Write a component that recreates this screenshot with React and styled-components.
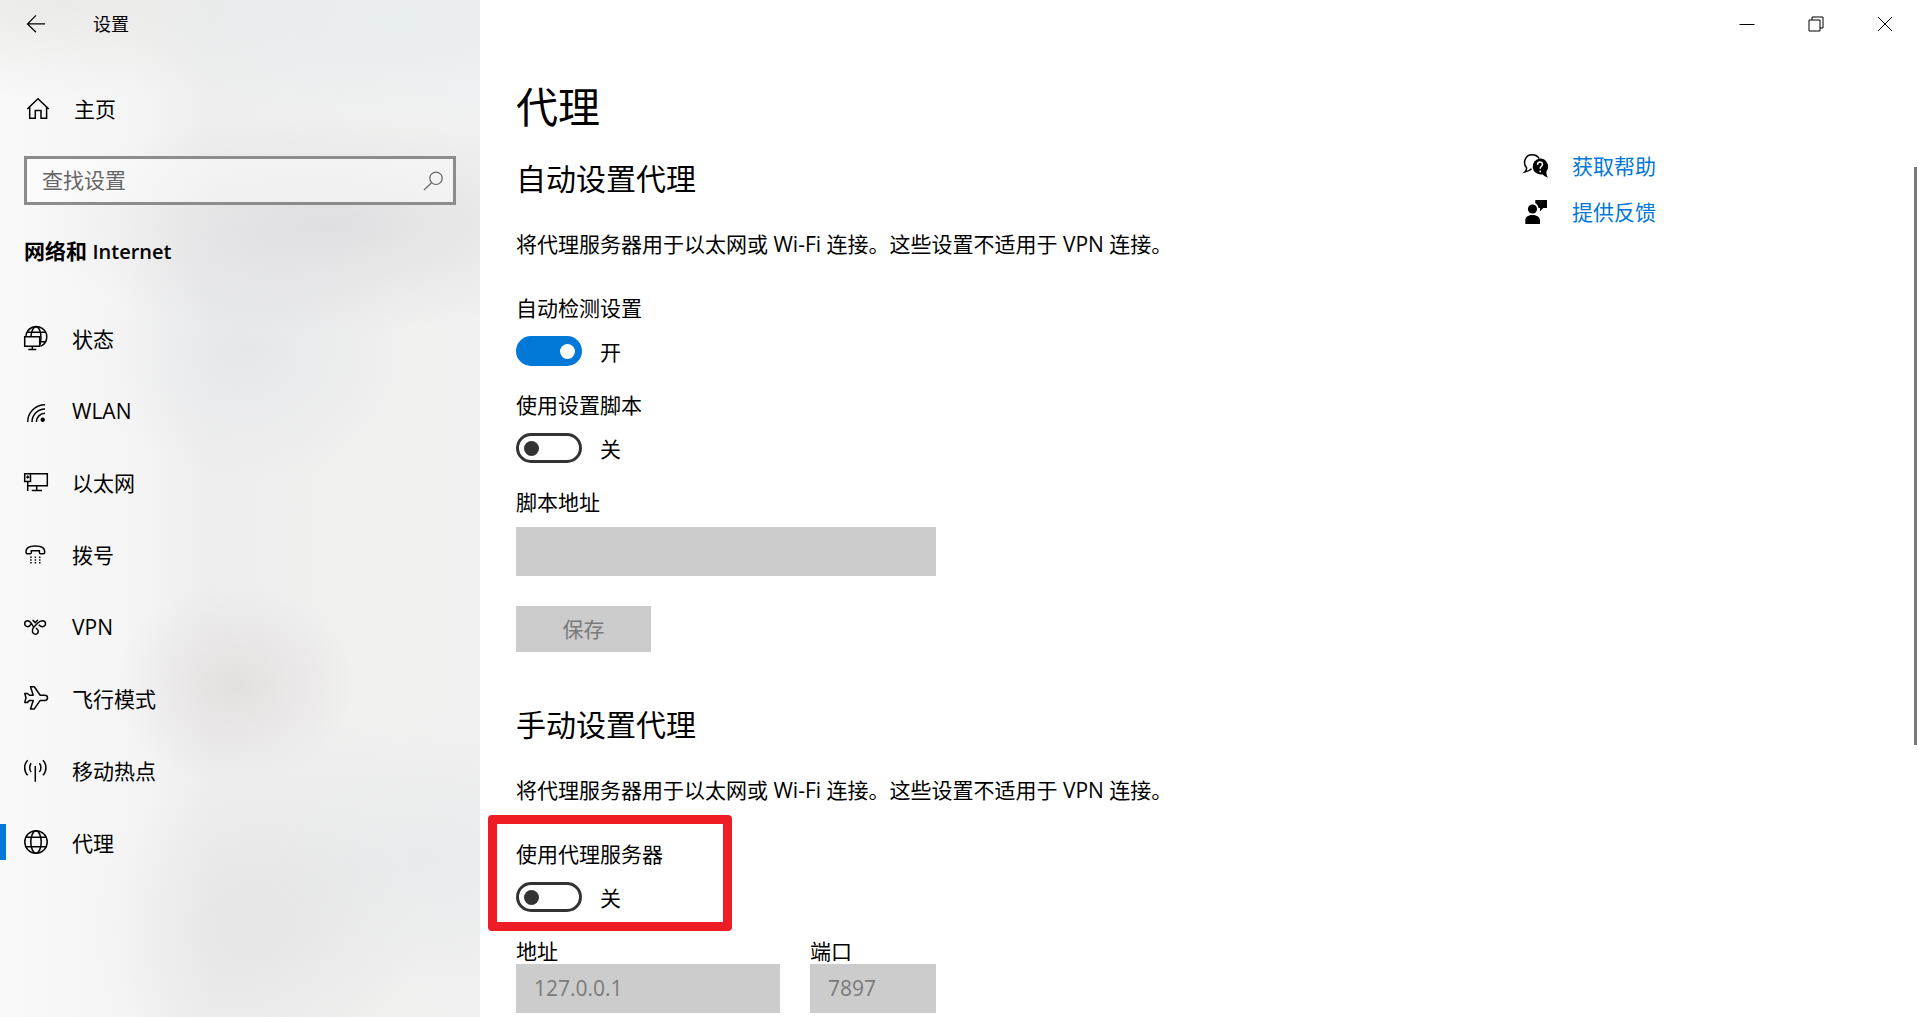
import React, { useState } from "react";
import styled, { createGlobalStyle } from "styled-components";

const accent = "#0078d7";

const GlobalStyle = createGlobalStyle`
  * { box-sizing: border-box; }
  body {
    margin: 0;
    background: #fff;
    color: #000;
    font-family: "Open Sans", "Noto Sans CJK SC", sans-serif;
    font-size: 21px;
    font-weight: 400;
    line-height: 28px;
  }
  input, button { font: inherit; color: inherit; border-radius: 0; }
`;

const Window = styled.div`
  display: flex;
  height: 100vh;
  overflow: hidden;
`;

const Sidebar = styled.aside`
  flex: 0 0 480px;
  display: flex;
  flex-direction: column;
  background:
    radial-gradient(ellipse 120px 100px at 235px 685px, rgba(214, 206, 206, 0.45), rgba(214, 206, 206, 0) 100%),
    radial-gradient(ellipse 300px 110px at 330px 225px, rgba(212, 212, 216, 0.6), rgba(212, 212, 216, 0) 100%),
    radial-gradient(ellipse 170px 130px at 250px 350px, rgba(218, 221, 227, 0.4), rgba(218, 221, 227, 0) 100%),
    radial-gradient(ellipse 170px 160px at 250px 930px, rgba(220, 220, 221, 0.45), rgba(220, 220, 221, 0) 100%),
    radial-gradient(ellipse 240px 150px at 420px 860px, rgba(226, 228, 231, 0.55), rgba(226, 228, 231, 0) 100%),
    radial-gradient(ellipse 260px 110px at 400px 20px, rgba(229, 236, 240, 0.7), rgba(229, 236, 240, 0) 100%),
    radial-gradient(ellipse 360px 100px at 60px 0px, rgba(228, 228, 226, 0.7), rgba(228, 228, 226, 0) 100%),
    linear-gradient(90deg, #f9f9f9 0px, #f5f5f5 130px, #eeeeee 210px, #f1f1f0 400px, #f1f1f1 480px);
`;

const TitleBar = styled.header`
  display: flex;
  align-items: center;
  height: 48px;
  padding-left: 24px;
  gap: 45px;
  font-size: 18px;
  line-height: 24px;
`;

const BackButton = styled.button`
  display: flex;
  padding: 0;
  border: 0;
  background: none;
`;

const HomeLink = styled.a`
  display: flex;
  align-items: center;
  gap: 24px;
  height: 48px;
  margin-top: 37px;
  padding-left: 26px;
  color: inherit;
  text-decoration: none;
`;

const SearchBox = styled.label`
  display: flex;
  align-items: center;
  height: 49px;
  margin: 23px 24px 0;
  padding: 0 8px 0 15px;
  border: 3px solid #8c8c8c;
  background: rgba(255, 255, 255, 0.45);
  color: #666;
`;

const SearchInput = styled.input.attrs({ type: "search" })`
  flex: 1;
  min-width: 0;
  padding: 0 0 2px;
  border: 0;
  outline: 0;
  background: none;
  &::placeholder { color: #666; opacity: 1; }
`;

const Category = styled.h2`
  margin: 32px 24px 0;
  font-size: 21px;
  line-height: 28px;
  font-weight: 700;
`;

const Latin = styled.span`
  font-size: 20px;
  font-weight: 600;
`;

const Nav = styled.nav`
  display: flex;
  flex-direction: column;
  margin-top: 36px;
`;

const NavItem = styled.a`
  display: flex;
  align-items: center;
  gap: 24px;
  height: 72px;
  color: inherit;
  text-decoration: none;
  &::before {
    content: "";
    width: 6px;
    height: 36px;
    margin-right: -6px;
    background: ${(p) => (p.$active ? accent : "transparent")};
  }
`;

const NavLabel = styled.span`
  padding-top: 2px;
`;

const Icon = styled.svg`
  flex: none;
  width: 24px;
  height: 24px;
  overflow: visible;
  fill: none;
  stroke: currentColor;
  stroke-width: ${(p) => p.$stroke || 1.5};
`;

const Main = styled.main`
  position: relative;
  flex: 1;
  min-width: 0;
`;

const CaptionBar = styled.div`
  display: flex;
  justify-content: flex-end;
  height: 48px;
  padding-right: 1px;
`;

const CaptionButton = styled.button`
  display: grid;
  place-items: center;
  width: 69px;
  padding: 0;
  border: 0;
  background: none;
`;

const Body = styled.div`
  display: flex;
  padding: 31px 36px 0;
`;

const Content = styled.div`
  flex: 1;
  min-width: 0;
`;

const PageTitle = styled.h1`
  margin: 0 0 24px;
  font-size: 42px;
  line-height: 56px;
  font-weight: 400;
`;

const SectionTitle = styled.h2`
  margin: 0;
  font-size: 30px;
  line-height: 40px;
  font-weight: 400;
`;

const Section = styled.section`
  & + & { margin-top: 53px; }
`;

const Description = styled.p`
  margin: 31px 0 36px;
`;

const Setting = styled.div`
  position: relative;
  display: flex;
  flex-direction: column;
  gap: 14px;
  margin-bottom: 25px;
`;

const SwitchRow = styled.div`
  display: flex;
  align-items: center;
  gap: 18px;
  height: 30px;
`;

const Switch = styled.input.attrs({ type: "checkbox", role: "switch" })`
  appearance: none;
  display: flex;
  align-items: center;
  justify-content: ${(p) => (p.checked ? "flex-end" : "flex-start")};
  width: 66px;
  height: 30px;
  margin: 0;
  padding: 0 ${(p) => (p.checked ? 4 : 5)}px;
  border: 3px solid ${(p) => (p.checked ? accent : "#333")};
  border-radius: 15px;
  background: ${(p) => (p.checked ? accent : "#fff")};
  &::before {
    content: "";
    width: 15px;
    height: 15px;
    border-radius: 50%;
    background: ${(p) => (p.checked ? "#fff" : "#333")};
  }
`;

const SwitchState = styled.span`
  padding-top: 2px;
`;

const Highlight = styled.div`
  position: absolute;
  top: -25px;
  left: -28px;
  width: 244px;
  height: 116px;
  border: 9px solid #ee1c25;
  border-radius: 4px;
  pointer-events: none;
`;

const Field = styled.div`
  display: flex;
  flex-direction: column;
  width: ${(p) => p.$width}px;
  gap: ${(p) => p.$gap}px;
`;

const FieldLabel = styled.label`
  line-height: ${(p) => (p.$compact ? 24 : 28)}px;
`;

const TextBox = styled.input.attrs({ type: "text" })`
  width: 100%;
  height: 49px;
  padding: 0 18px 2px;
  border: 0;
  background: #ccc;
  color: #7a7a7a;
`;

const FieldRow = styled.div`
  display: flex;
  gap: 30px;
  margin-top: 27px;
`;

const SaveButton = styled.button`
  display: block;
  width: 135px;
  height: 46px;
  margin-top: 30px;
  padding: 0;
  border: 0;
  background: #ccc;
  color: #7a7a7a;
`;

const Help = styled.aside`
  flex: 0 0 360px;
  display: flex;
  flex-direction: column;
  gap: 18px;
  padding-top: 73px;
`;

const HelpLink = styled.a`
  display: flex;
  align-items: center;
  gap: 24px;
  color: ${accent};
  text-decoration: none;
  svg { color: #000; }
`;

const ScrollThumb = styled.div`
  position: absolute;
  top: 167px;
  right: 3px;
  width: 3px;
  height: 578px;
  background: #7a7a7a;
`;

const icons = {
  status: (
    <>
      <path d="M2 10A10.4 10.4 0 1 1 17 20.2" />
      <path d="M3.3 6.2H21M16 15.8h5.6M7 10c.3-4 2-9.2 5-9.2s5 5.2 5 10.2c0 3.5-.5 6.500-1.500 9" />
      <path d="M.7 10.700h15v9.600H.7zM8.300 20.300v3.200M4.300 23.500h8" />
    </>
  ),
  wlan: (
    <>
      <path d="M3.700 24A17.300 17.300 0 0 1 21 6.700M8 24A13 13 0 0 1 21 11M12.300 24A8.700 8.700 0 0 1 21 15.300" />
      <circle cx="18.700" cy="21.700" r="2.200" fill="currentColor" stroke="none" />
    </>
  ),
  ethernet: (
    <path d="M6.500 3.700h16.800v12H3.700M.7 3.700h5.800v7.800H.7zM2.300 7.300h3M3.700 5.500v3M3.700 11.500V21M12.700 15.700v4.600M7.700 20.500h10.300" />
  ),
  dialup: (
    <>
      <path d="M2 10.300V9.500C2 5.800 6 4 11.300 4s9.400 1.800 9.400 5.500v.8c0 1-.6 1.500-1.500 1.500h-2.500c-.8 0-1.300-.5-1.300-1.300V8.700H7.300v1.800c0 .8-.5 1.300-1.300 1.300H3.500c-.9 0-1.500-.5-1.500-1.500z" />
      <path d="M6.200 15.300h1.500M10.600 15.300h1.500M15 15.300h1.500M6.200 18h1.500M10.600 18h1.500M15 18h1.500M6.200 20.700h1.500M10.600 20.700h1.500M15 20.700h1.500" />
    </>
  ),
  vpn: (
    <path d="M10.500 13.500C8 12 7 6.700 3.700 6.700a3 3 0 0 0 0 6c1.800 0 2.800-1.500 3.700-3M9.500 13.600l4-4.300c1.700-1.700 3-2.600 5-2.600a3 3 0 0 1 0 6c-1.500 0-2.700-.8-3.700-2M9.500 13.600c-2.500 2.700-.7 6.700 1.800 6.700a3 3 0 0 0 3-3c0-1.500-1-2.300-2.300-3.300M8.600 6l2.600 2.600L13.800 6" />
  ),
  airplane: (
    <path
      strokeLinejoin="round"
      d="M6.500.7h3.800l5.900 8.500h4.600c1.800 0 2.700 1.200 2.700 2.600s-.9 2.600-2.700 2.600h-4.600l-5.900 8.500H6.500l2.700-8.500H5.500l-2 2H.8L2 11.800.8 7.500h2.700l2 1.700h3.700z"
    />
  ),
  hotspot: (
    <path d="M11.300 8v15.800M7.200 5.300c-2 2.200-2 6.500 0 8.700M15.400 5.300c2 2.200 2 6.500 0 8.700M3.700 2.300c-4 3.700-4 11.300 0 15M18.900 2.300c4 3.700 4 11.300 0 15" />
  ),
  proxy: (
    <>
      <circle cx="12" cy="12" r="11.200" />
      <ellipse cx="12" cy="12" rx="5.200" ry="11.200" />
      <path d="M2 7.300h20M2 16.700h20" />
    </>
  ),
};

const navItems = [
  ["status", "状态"],
  ["wlan", "WLAN"],
  ["ethernet", "以太网"],
  ["dialup", "拨号"],
  ["vpn", "VPN"],
  ["airplane", "飞行模式"],
  ["hotspot", "移动热点"],
  ["proxy", "代理"],
];

const description = "将代理服务器用于以太网或 Wi-Fi 连接。这些设置不适用于 VPN 连接。";

function SwitchSetting({ id, label, initial = false, highlighted = false }) {
  const [on, setOn] = useState(initial);
  return (
    <Setting>
      <label htmlFor={id}>{label}</label>
      <SwitchRow>
        <Switch id={id} checked={on} onChange={(e) => setOn(e.target.checked)} />
        <SwitchState>{on ? "开" : "关"}</SwitchState>
      </SwitchRow>
      {highlighted && <Highlight />}
    </Setting>
  );
}

export default function App() {
  return (
    <>
      <GlobalStyle />
      <Window lang="zh-CN">
        <Sidebar>
          <TitleBar>
            <BackButton aria-label="返回">
              <Icon viewBox="0 0 24 24" $stroke={1.2}>
                <path d="M12 3.300L3.500 12l8.500 8.300M3.500 11.800H21" />
              </Icon>
            </BackButton>
            <span>设置</span>
          </TitleBar>
          <HomeLink href="#home">
            <Icon viewBox="0 0 24 24">
              <path d="M1.300 12L12 1.700 22.700 12M3.700 10v11.300h5.600v-7.800h5.700v7.800h5.600V10" />
            </Icon>
            主页
          </HomeLink>
          <SearchBox>
            <SearchInput placeholder="查找设置" aria-label="查找设置" />
            <Icon viewBox="0 0 24 24" $stroke={1.2}>
              <circle cx="15" cy="9.300" r="6.200" />
              <path d="M10.500 13.700L3 21" />
            </Icon>
          </SearchBox>
          <Category>
            网络和 <Latin>Internet</Latin>
          </Category>
          <Nav>
            {navItems.map(([key, label]) => (
              <NavItem
                key={key}
                href={`#${key}`}
                $active={key === "proxy"}
                aria-current={key === "proxy" ? "page" : undefined}
              >
                <Icon viewBox="0 0 24 24">{icons[key]}</Icon>
                <NavLabel>{label}</NavLabel>
              </NavItem>
            ))}
          </Nav>
        </Sidebar>

        <Main>
          <CaptionBar>
            <CaptionButton aria-label="最小化">
              <Icon viewBox="0 0 24 24" $stroke={1}>
                <path d="M4.500 12.500h15" />
              </Icon>
            </CaptionButton>
            <CaptionButton aria-label="还原">
              <Icon viewBox="0 0 24 24" $stroke={1}>
                <path d="M5 8h11v11H5zM8 8V5h11v11h-3" />
              </Icon>
            </CaptionButton>
            <CaptionButton aria-label="关闭">
              <Icon viewBox="0 0 24 24" $stroke={1}>
                <path d="M5 5l14 14M19 5L5 19" />
              </Icon>
            </CaptionButton>
          </CaptionBar>
          <Body>
            <Content>
              <PageTitle>代理</PageTitle>
              <Section>
                <SectionTitle>自动设置代理</SectionTitle>
                <Description>{description}</Description>
                <SwitchSetting id="auto-detect" label="自动检测设置" initial />
                <SwitchSetting id="use-script" label="使用设置脚本" />
                <Field $width={420} $gap={11}>
                  <FieldLabel htmlFor="script-address">脚本地址</FieldLabel>
                  <TextBox id="script-address" disabled />
                </Field>
                <SaveButton disabled>保存</SaveButton>
              </Section>
              <Section>
                <SectionTitle>手动设置代理</SectionTitle>
                <Description>{description}</Description>
                <SwitchSetting id="use-proxy" label="使用代理服务器" highlighted />
                <FieldRow>
                  <Field $width={264} $gap={1}>
                    <FieldLabel $compact htmlFor="address">地址</FieldLabel>
                    <TextBox id="address" defaultValue="127.0.0.1" disabled />
                  </Field>
                  <Field $width={126} $gap={1}>
                    <FieldLabel $compact htmlFor="port">端口</FieldLabel>
                    <TextBox id="port" defaultValue="7897" disabled />
                  </Field>
                </FieldRow>
              </Section>
            </Content>
            <Help>
              <HelpLink href="#help">
                <Icon viewBox="0 0 24 24">
                  <path d="M7.500 14.800c-1.500 1.700-3.500 2.700-6.700 3.200 1.500-1.300 2-2.500 1.700-4.200C-1.500 9 1 .7 8 .7c3.500 0 6 1.600 7.200 4" />
                  <path
                    fill="currentColor"
                    stroke="none"
                    d="M16 4.500a8 8 0 0 1 6.500 12.800c-.3 2.500.2 4.700 1.500 6.500-2.200-.8-4.200-2-5.700-3.500A8 8 0 1 1 16 4.500z"
                  />
                  <path stroke="#fff" d="M13.500 10.700c0-3.500 5-3.300 5-.5 0 2-2.300 2.200-2.300 4.600M16.200 16.500v1.700" />
                </Icon>
                获取帮助
              </HelpLink>
              <HelpLink href="#feedback">
                <Icon viewBox="0 0 24 24">
                  <path
                    fill="currentColor"
                    stroke="none"
                    d="M11.300 0H23v8h-3.700L16 11.300V8h-1.500c-.4-2.400-1.500-4-3.200-4.800zM1.300 24v-3.500C1.300 17.300 3.700 15 8.500 15s7.500 2.300 7.500 5.500V24z"
                  />
                  <circle cx="8.500" cy="9" r="4.600" fill="currentColor" stroke="none" />
                </Icon>
                提供反馈
              </HelpLink>
            </Help>
          </Body>
          <ScrollThumb />
        </Main>
      </Window>
    </>
  );
}
